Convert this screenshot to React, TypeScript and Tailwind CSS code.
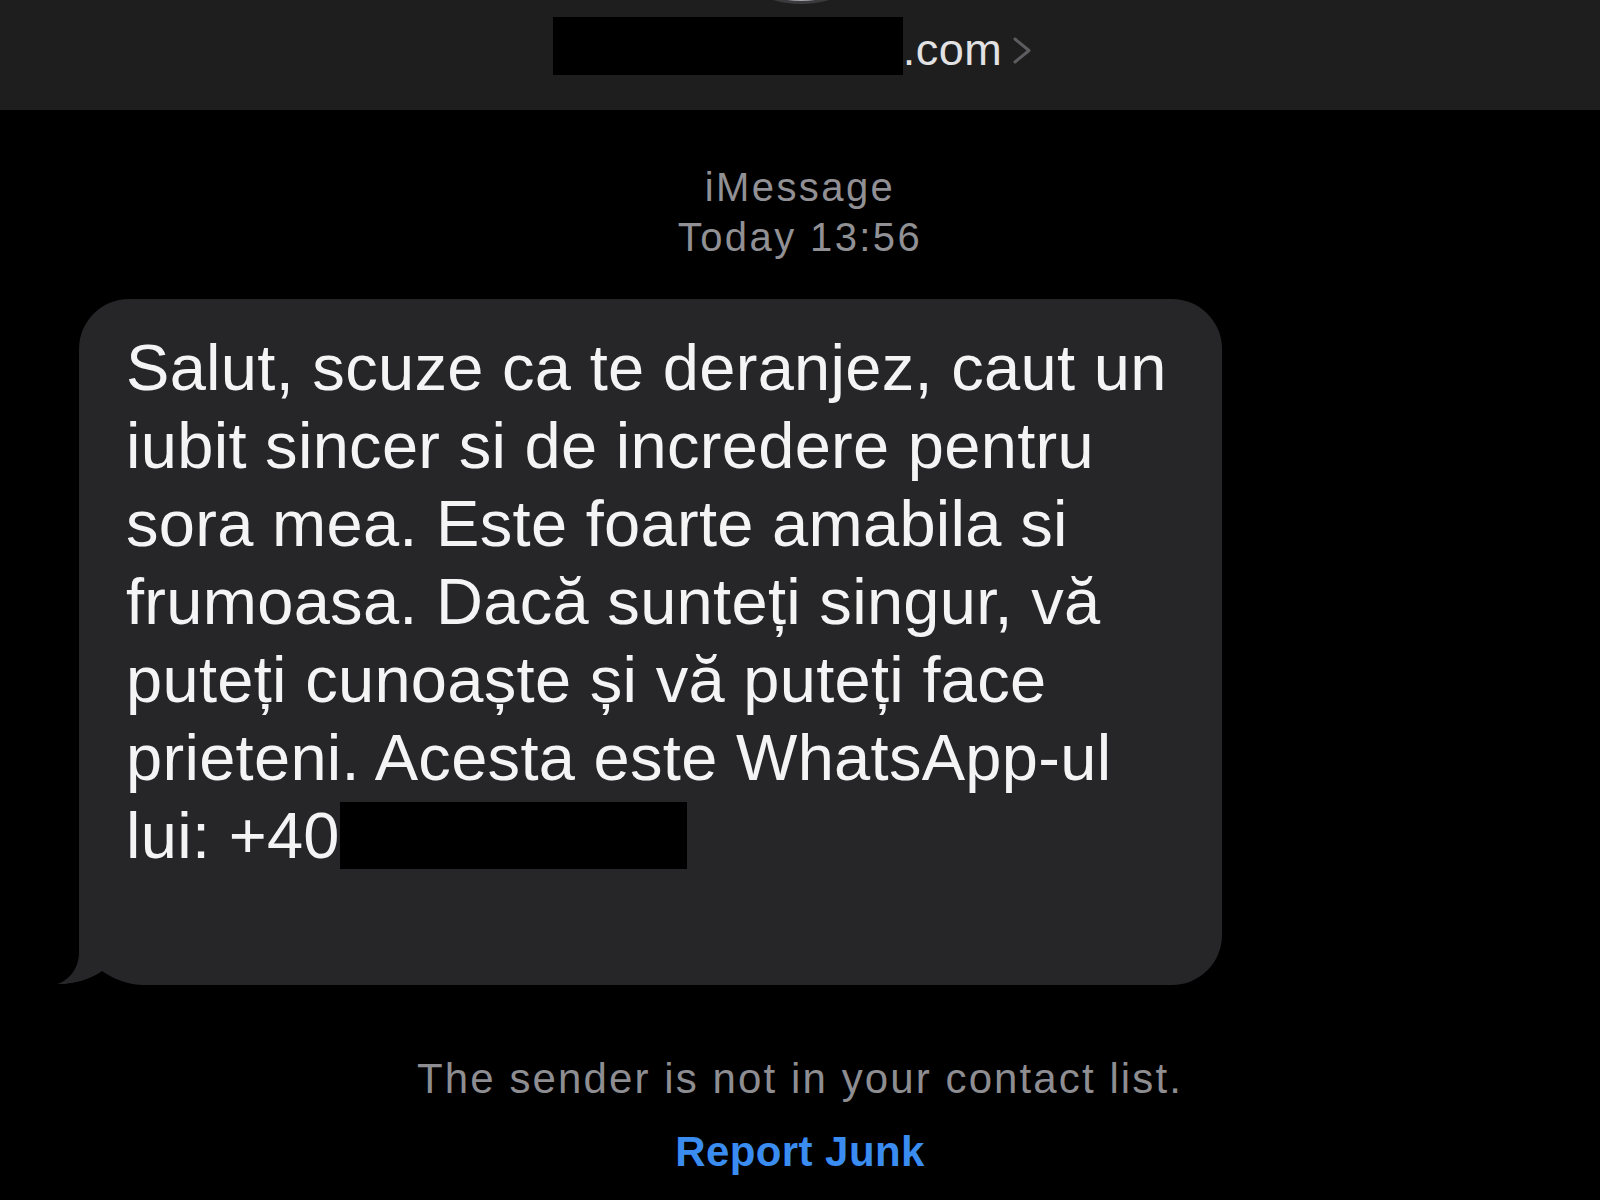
import React from "react";

const lines = [
  "Salut, scuze ca te deranjez, caut un",
  "iubit sincer si de incredere pentru",
  "sora mea. Este foarte amabila si",
  "frumoasa. Dacă sunteți singur, vă",
  "puteți cunoaște și vă puteți face",
  "prieteni. Acesta este WhatsApp-ul",
];

export default function App() {
  return (
    <div
      className="w-[1600px] h-[1200px] bg-black overflow-hidden"
      style={{ fontFamily: '"Liberation Sans", Arial, sans-serif' }}
    >
      {/* Header */}
      <header className="relative h-[110px] bg-[#1e1e1f] flex justify-center pt-[17px] overflow-hidden">
        <div className="absolute left-[701px] top-[-196px] w-[200px] h-[200px] rounded-full bg-[#a3a5ab] border-[3px] border-[#3b3b3e]" />
        <div className="flex items-start ml-[-14px]">
          <div className="w-[350px] h-[58px] bg-black" />
          <span className="mt-[10px] text-[45px] leading-none text-[#e2e2e4] tracking-[0.01em]">
            .com
          </span>
          <svg
            className="ml-[10px] mt-[19px]"
            width="21"
            height="29"
            viewBox="0 0 21 29"
            fill="none"
          >
            <polyline
              points="3,3 17,14.5 3,26"
              stroke="#5d5d61"
              strokeWidth="3"
              strokeLinecap="round"
              strokeLinejoin="round"
            />
          </svg>
        </div>
      </header>

      {/* Service + time */}
      <div className="pt-[52px] flex flex-col items-center text-[40px] leading-[50px] text-[#909095] tracking-[0.06em]">
        <div>iMessage</div>
        <div>Today 13:56</div>
      </div>

      {/* Bubble */}
      <div className="pt-[37px] pl-[79px]">
        <div className="relative w-[1143px] h-[686px] bg-[#262629] rounded-[50px] rounded-bl-none pt-[30px] pl-[47px] text-[65px] leading-[78px] text-[#f4f4f5] tracking-[0.3px]">
          {lines.map((l) => (
            <div key={l} className="whitespace-nowrap">
              {l}
            </div>
          ))}
          <div className="whitespace-nowrap">
            lui: +40
            <span className="inline-block w-[347px] h-[67px] bg-black align-[-11px]" />
          </div>
          <svg
            className="absolute left-[-29px] bottom-[-5px]"
            width="100"
            height="60"
            viewBox="0 0 100 60"
          >
            <path
              d="M 29 0 L 29 22 C 29 38 20 50 7 54 C 20 55 40 50 52 41 L 52 0 Z"
              fill="#262629"
            />
            <path
              d="M 0 60 L 0 55 L 7 54 C 20 55 40 50 52 41 C 62 48 75 54 92 55 L 100 55 L 100 60 Z"
              fill="#000000"
            />
          </svg>
        </div>
      </div>

      {/* Footer */}
      <div className="mt-[69px] flex flex-col items-center">
        <div className="text-[42px] leading-[50px] text-[#8d8d92] tracking-[0.05em]">
          The sender is not in your contact list.
        </div>
        <div className="mt-[23px] text-[42px] leading-[50px] font-bold text-[#3a8cf0] tracking-[0.01em]">
          Report Junk
        </div>
      </div>
    </div>
  );
}
